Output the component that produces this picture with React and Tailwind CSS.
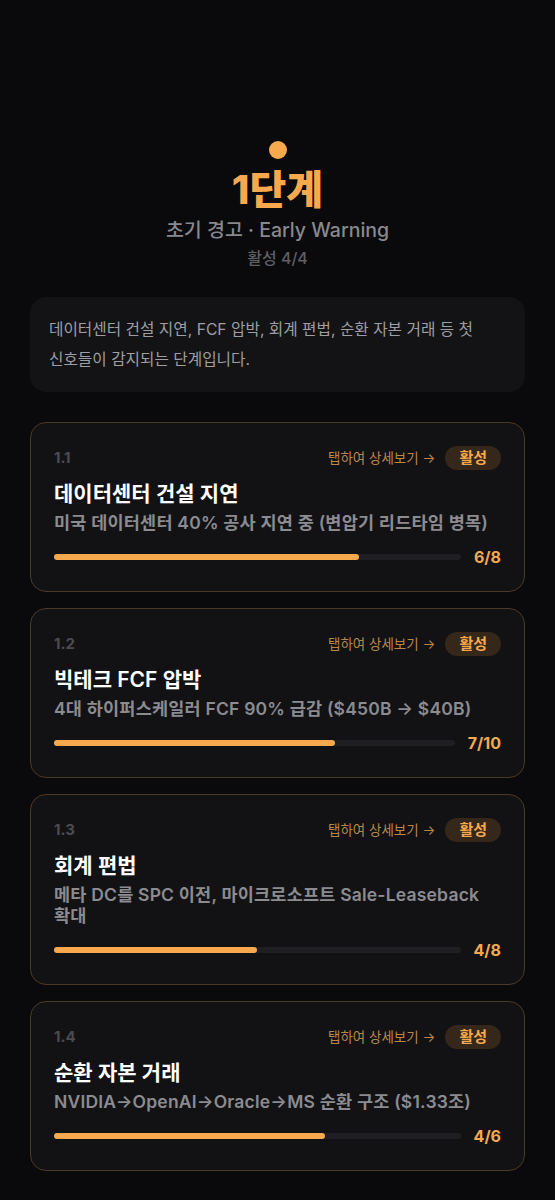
import React from 'react';

const font = { fontFamily: '"Inter", "Noto Sans CJK KR", sans-serif' };

const items = [
  { id: '1.1', title: '데이터센터 건설 지연', desc: '미국 데이터센터 40% 공사 지연 중 (변압기 리드타임 병목)', cur: 6, total: 8 },
  { id: '1.2', title: '빅테크 FCF 압박', desc: '4대 하이퍼스케일러 FCF 90% 급감 ($450B → $40B)', cur: 7, total: 10 },
  { id: '1.3', title: '회계 편법', desc: '메타 DC를 SPC 이전, 마이크로소프트 Sale-Leaseback 확대', cur: 4, total: 8 },
  { id: '1.4', title: '순환 자본 거래', desc: 'NVIDIA→OpenAI→Oracle→MS 순환 구조 ($1.33조)', cur: 4, total: 6 },
];

const SignalCard = ({ item }) => (
  <div className="rounded-2xl border border-[#4a3a27] bg-[#121215] px-[23px] pt-[23px] pb-[23px]">
    <div className="flex items-center justify-between">
      <span className="text-[15px] font-bold leading-[24px] text-[#4b4b50]">{item.id}</span>
      <div className="flex items-center gap-[10px]">
        <span className="text-[13.5px] text-[#b7874a]">탭하여 상세보기 →</span>
        <span className="rounded-full bg-[#35271a] px-[14px] py-[1px] text-[15px] font-bold leading-[22px] text-[#f6a94c]">활성</span>
      </div>
    </div>
    <h3 className="mt-[11px] text-[21px] font-semibold leading-[26px] text-white">{item.title}</h3>
    <p className="mt-[5px] break-keep text-[17.5px] font-semibold leading-[21px] tracking-[0.2px] text-[#8b8b90]">{item.desc}</p>
    <div className="mt-[13px] flex items-center gap-[13px]">
      <div className="h-[6px] flex-1 rounded-full bg-[#1f1f23]">
        <div className="h-full rounded-full bg-[#f8a94d]" style={{ width: `${(item.cur / item.total) * 100}%` }} />
      </div>
      <span className="text-[16px] font-bold leading-[22px] text-[#f6a94c]">{item.cur}/{item.total}</span>
    </div>
  </div>
);

export default function App() {
  return (
    <div className="min-h-[1200px] bg-[#0a0a0c] px-[30px] pt-[141px] pb-[28px]" style={font}>
      <div className="flex flex-col items-center">
        <div className="h-[18px] w-[18px] rounded-full bg-[#f8a94d]" />
        <h1 className="mt-[9px] text-[40px] font-extrabold leading-[44px] text-[#f8a94d]">1단계</h1>
        <p className="mt-[5px] text-[19.5px] font-medium leading-[26px] text-[#88888d]">초기 경고 · Early Warning</p>
        <p className="mt-[5px] text-[16px] font-medium leading-[20px] text-[#5f5f64]">활성 4/4</p>
      </div>

      <div className="mt-[29px] rounded-2xl bg-[#131316] px-[19px] pt-[18px] pb-[17px]">
        <p className="break-keep text-[15.7px] leading-[30px] text-[#9e9ea3]">
          데이터센터 건설 지연, FCF 압박, 회계 편법, 순환 자본 거래 등 첫 신호들이 감지되는 단계입니다.
        </p>
      </div>

      <div className="mt-[30px] flex flex-col gap-[16px]">
        {items.map((item) => (
          <SignalCard key={item.id} item={item} />
        ))}
      </div>
    </div>
  );
}
